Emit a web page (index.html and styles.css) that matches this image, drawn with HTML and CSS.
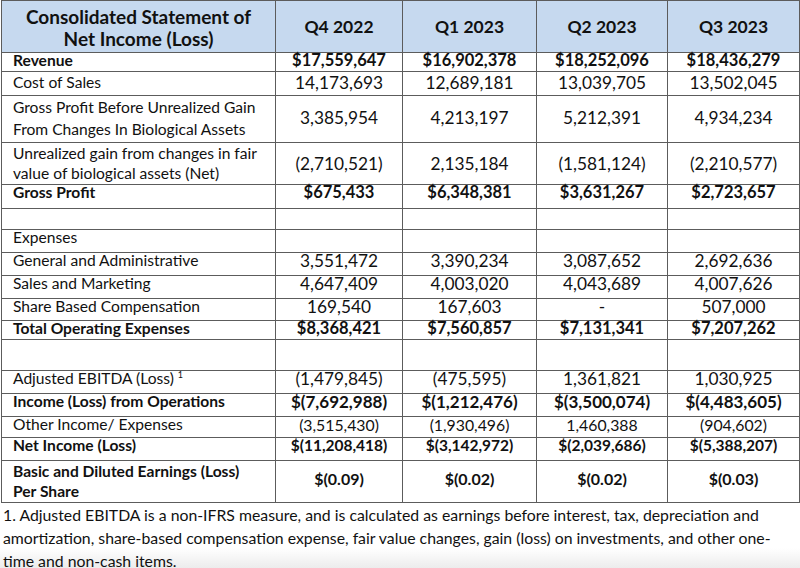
FILE: index.html
```html
<!DOCTYPE html>
<html lang="en">
<head>
<meta charset="utf-8">
<title>Consolidated Statement of Net Income (Loss)</title>
<link rel="stylesheet" href="styles.css">
</head>
<body>
<main class="page">
  <table class="stmt">
    <colgroup>
      <col class="c-label">
      <col class="c-q4">
      <col class="c-q1">
      <col class="c-q2">
      <col class="c-q3">
    </colgroup>
    <thead>
      <tr class="r-head">
        <th class="title">Consolidated Statement of<br>Net Income (Loss)</th>
        <th>Q4 2022</th>
        <th>Q1 2023</th>
        <th>Q2 2023</th>
        <th>Q3 2023</th>
      </tr>
    </thead>
    <tbody>
      <tr class="r-rev bold">
        <td class="label">Revenue</td>
        <td>$17,559,647</td><td>$16,902,378</td><td>$18,252,096</td><td>$18,436,279</td>
      </tr>
      <tr class="r-cost">
        <td class="label">Cost of Sales</td>
        <td>14,173,693</td><td>12,689,181</td><td>13,039,705</td><td>13,502,045</td>
      </tr>
      <tr class="r-gpb multi">
        <td class="label">Gross Profit Before Unrealized Gain<br>From Changes In Biological Assets</td>
        <td>3,385,954</td><td>4,213,197</td><td>5,212,391</td><td>4,934,234</td>
      </tr>
      <tr class="r-unr multi">
        <td class="label">Unrealized gain from changes in fair<br>value of biological assets (Net)</td>
        <td>(2,710,521)</td><td>2,135,184</td><td>(1,581,124)</td><td>(2,210,577)</td>
      </tr>
      <tr class="r-gp bold">
        <td class="label">Gross Profit</td>
        <td>$675,433</td><td>$6,348,381</td><td>$3,631,267</td><td>$2,723,657</td>
      </tr>
      <tr class="r-empty1">
        <td></td><td></td><td></td><td></td><td></td>
      </tr>
      <tr class="r-exp">
        <td class="label">Expenses</td>
        <td></td><td></td><td></td><td></td>
      </tr>
      <tr class="r-ga">
        <td class="label">General and Administrative</td>
        <td>3,551,472</td><td>3,390,234</td><td>3,087,652</td><td>2,692,636</td>
      </tr>
      <tr class="r-sm">
        <td class="label">Sales and Marketing</td>
        <td>4,647,409</td><td>4,003,020</td><td>4,043,689</td><td>4,007,626</td>
      </tr>
      <tr class="r-sbc">
        <td class="label">Share Based Compensation</td>
        <td>169,540</td><td>167,603</td><td>-</td><td>507,000</td>
      </tr>
      <tr class="r-toe bold">
        <td class="label">Total Operating Expenses</td>
        <td>$8,368,421</td><td>$7,560,857</td><td>$7,131,341</td><td>$7,207,262</td>
      </tr>
      <tr class="r-empty2">
        <td></td><td></td><td></td><td></td><td></td>
      </tr>
      <tr class="r-adj">
        <td class="label">Adjusted EBITDA (Loss) <sup class="fn">1</sup></td>
        <td>(1,479,845)</td><td>(475,595)</td><td>1,361,821</td><td>1,030,925</td>
      </tr>
      <tr class="r-inc bold">
        <td class="label">Income (Loss) from Operations</td>
        <td>$(7,692,988)</td><td>$(1,212,476)</td><td>$(3,500,074)</td><td>$(4,483,605)</td>
      </tr>
      <tr class="r-oth">
        <td class="label">Other Income/ Expenses</td>
        <td>(3,515,430)</td><td>(1,930,496)</td><td>1,460,388</td><td>(904,602)</td>
      </tr>
      <tr class="r-net bold">
        <td class="label">Net Income (Loss)</td>
        <td>$(11,208,418)</td><td>$(3,142,972)</td><td>$(2,039,686)</td><td>$(5,388,207)</td>
      </tr>
      <tr class="r-eps bold multi">
        <td class="label">Basic and Diluted Earnings (Loss)<br>Per Share</td>
        <td>$(0.09)</td><td>$(0.02)</td><td>$(0.02)</td><td>$(0.03)</td>
      </tr>
    </tbody>
  </table>
  <p class="note">1. Adjusted EBITDA is a non-IFRS measure, and is calculated as earnings before interest, tax, depreciation and<br>amortization, share-based compensation expense, fair value changes, gain (loss) on investments, and other one-<br>time and non-cash items.</p>
</main>
</body>
</html>
```

FILE: styles.css
```css
html {
  background: linear-gradient(to bottom, #ffffff 0, #ffffff 548px, #ececec 568px);
  min-height: 100%;
}

body {
  margin: 0;
  font-family: "Lato", "Liberation Sans", sans-serif;
  color: #111111;
}

.page {
  padding: 0 1px;
}

.stmt {
  border-collapse: collapse;
  table-layout: fixed;
  width: 798px;
  font-size: 17.3px;
}

.c-label { width: 274px; }
.c-q4 { width: 127px; }
.c-q1 { width: 134px; }
.c-q2 { width: 131px; }
.c-q3 { width: 132px; }

.stmt th,
.stmt td {
  border: 1px solid #5c5c5c;
  padding: 0;
  text-align: center;
  vertical-align: top;
  line-height: 15px;
  white-space: nowrap;
}

.stmt th {
  background: #c6d9ef;
  font-weight: 700;
  font-size: 17.5px;
  line-height: 22px;
  vertical-align: middle;
}

.stmt th.title {
  font-size: 19px;
  padding-top: 3px;
}

.stmt td.label {
  text-align: left;
  padding-left: 11px;
  font-size: 15.6px;
}

.bold td {
  font-weight: 700;
  font-size: 16.5px;
}

.multi td {
  vertical-align: middle;
  line-height: 17px;
}

.r-cost td {
  padding-top: 3px;
}

.r-gpb td {
  padding-bottom: 3px;
}

.multi td.label {
  vertical-align: top;
  padding-bottom: 0;
  line-height: 20px;
}

.r-gpb td.label {
  line-height: 22px;
}

.r-eps td {
  padding-bottom: 6px;
  font-size: 16px;
}

.r-inc td {
  font-size: 17px;
}

.r-net td {
  font-size: 15.5px;
}

.r-oth td {
  font-size: 15.8px;
}

.fn {
  font-size: 9px;
  vertical-align: 6px;
  line-height: 0;
}

.r-head { height: 52px; }
.r-rev { height: 19px; }
.r-cost { height: 24px; }
.r-gpb { height: 47px; }
.r-unr { height: 42px; }
.r-gp { height: 24px; }
.r-empty1 { height: 21px; }
.r-exp { height: 23px; }
.r-ga { height: 23px; }
.r-sm { height: 23px; }
.r-sbc { height: 22px; }
.r-toe { height: 19px; }
.r-empty2 { height: 31px; }
.r-adj { height: 23px; }
.r-inc { height: 23px; }
.r-oth { height: 21px; }
.r-net { height: 23px; }
.r-eps { height: 42px; }

.note {
  margin: 0;
  padding: 0 0 0 2px;
  font-size: 15.8px;
  line-height: 23px;
  white-space: nowrap;
}
```
